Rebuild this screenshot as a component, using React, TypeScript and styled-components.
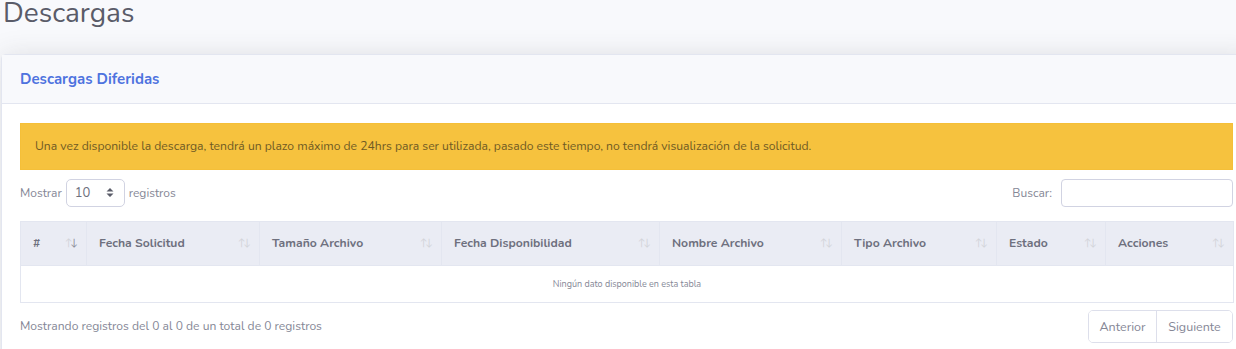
import React from "react";
import styled, { createGlobalStyle } from "styled-components";

const Global = createGlobalStyle`
  html, body { margin: 0; padding: 0; overflow: hidden; }
  body {
    background: #f8f9fc;
    font-family: "Nunito", "Lato", "Noto Sans", sans-serif;
    color: #858796;
  }
  * { box-sizing: border-box; }
`;

const Page = styled.div`
  width: 1280px;
  padding: 0 0 0 1px;
`;

const Title = styled.h1`
  margin: -3px 0 23px 2px;
  font-size: 28px;
  font-weight: 400;
  line-height: 1.2;
  color: #5a5c69;
`;

const Card = styled.section`
  width: 1253px;
  background: #fff;
  border: 1px solid #e3e6f0;
  border-radius: 5px;
  box-shadow: 0 2px 28px 0 rgba(58, 59, 69, 0.15);
`;

const CardHeader = styled.header`
  background: #f8f9fc;
  border-bottom: 1px solid #e3e6f0;
  padding: 12px 18px;
  height: 49px;
  display: flex;
  align-items: center;
`;

const CardTitle = styled.h6`
  margin: 0;
  font-size: 15px;
  font-weight: 700;
  color: #4e73df;
`;

const CardBody = styled.div`
  padding: 19px 19px 20px 18px;
  display: flex;
  flex-direction: column;
`;

const Alert = styled.div`
  width: 1213px;
  background: #f6c23e;
  border: 1px solid #f5bf38;
  color: #6f5a24;
  font-size: 12.15px;
  height: 47px;
  padding: 0 14px;
  display: flex;
  align-items: center;
  margin-bottom: 9px;
`;

const Controls = styled.div`
  width: 1213px;
  display: flex;
  justify-content: space-between;
  align-items: center;
  height: 28px;
  margin-bottom: 14px;
  font-size: 12px;
  color: #858796;
`;

const Label = styled.label`
  display: flex;
  align-items: center;
  gap: 4px;
`;

const SelectBox = styled.div`
  width: 59px;
  height: 28px;
  border: 1px solid #d1d3e2;
  border-radius: 5px;
  display: flex;
  align-items: center;
  justify-content: space-between;
  padding: 0 10px 0 8px;
  font-size: 13px;
  color: #6e707e;
  background: #fff;
`;

const SearchInput = styled.input`
  width: 172px;
  height: 28px;
  border: 1px solid #d1d3e2;
  border-radius: 4px;
  margin-left: 5px;
  background: #fff;
  outline: none;
`;

const Table = styled.table`
  width: 1213px;
  border-collapse: collapse;
  table-layout: fixed;
  margin-bottom: 7px;
`;

const Th = styled.th<{ $w: number }>`
  width: ${(p) => p.$w}px;
  height: 44px;
  background: #eaecf4;
  border: 1px solid #e3e6f0;
  text-align: left;
  padding: 0 12px 1px 12px;
  font-size: 12.2px;
  font-weight: 700;
  color: #6e707e;
  position: relative;
`;

const SortIcons = styled.span`
  position: absolute;
  right: 10px;
  top: 50%;
  transform: translateY(-50%);
  font-size: 10px;
  font-weight: 400;
  letter-spacing: -2px;
  display: flex;
`;

const Arrow = styled.span<{ $active?: boolean }>`
  color: ${(p) => (p.$active ? "#8a8c99" : "#d3d4da")};
`;

const Td = styled.td`
  height: 37px;
  border: 1px solid #e3e6f0;
  text-align: center;
  font-size: 9px;
  color: #858796;
`;

const Footer = styled.div`
  width: 1213px;
  display: flex;
  justify-content: space-between;
  align-items: center;
  font-size: 12.1px;
  color: #858796;
`;

const Pager = styled.div`
  display: flex;
  border: 1px solid #dddfeb;
  border-radius: 5px;
  overflow: hidden;
`;

const PageBtn = styled.button<{ $w: number }>`
  width: ${(p) => p.$w}px;
  height: 31px;
  border: none;
  background: #fff;
  color: #858796;
  font-family: inherit;
  font-size: 12.5px;
  padding: 0;
  & + & { border-left: 1px solid #dddfeb; }
`;

const columns: [string, number, boolean][] = [
  ["#", 66, true],
  ["Fecha Solicitud", 173, false],
  ["Tamaño Archivo", 182, false],
  ["Fecha Disponibilidad", 218, false],
  ["Nombre Archivo", 182, false],
  ["Tipo Archivo", 155, false],
  ["Estado", 109, false],
  ["Acciones", 128, false],
];

export default function App() {
  return (
    <Page>
      <Global />
      <Title>Descargas</Title>
      <Card>
        <CardHeader>
          <CardTitle>Descargas Diferidas</CardTitle>
        </CardHeader>
        <CardBody>
          <Alert>
            Una vez disponible la descarga, tendrá un plazo máximo de 24hrs para ser utilizada, pasado este tiempo, no tendrá visualización de la solicitud.
          </Alert>
          <Controls>
            <Label>
              Mostrar
              <SelectBox>
                <span>10</span>
                <svg width="8" height="11" viewBox="0 0 8 11">
                  <path d="M4 1 L7.5 4.5 H0.5 Z M4 10 L7.5 6.5 H0.5 Z" fill="#5a5c69" />
                </svg>
              </SelectBox>
              registros
            </Label>
            <Label>
              Buscar:
              <SearchInput type="search" />
            </Label>
          </Controls>
          <Table>
            <thead>
              <tr>
                {columns.map(([name, w, active]) => (
                  <Th key={name} $w={w}>
                    {name}
                    <SortIcons>
                      <Arrow>↑</Arrow>
                      <Arrow $active={active}>↓</Arrow>
                    </SortIcons>
                  </Th>
                ))}
              </tr>
            </thead>
            <tbody>
              <tr>
                <Td colSpan={8}>Ningún dato disponible en esta tabla</Td>
              </tr>
            </tbody>
          </Table>
          <Footer>
            <span>Mostrando registros del 0 al 0 de un total de 0 registros</span>
            <Pager>
              <PageBtn $w={67}>Anterior</PageBtn>
              <PageBtn $w={76}>Siguiente</PageBtn>
            </Pager>
          </Footer>
        </CardBody>
      </Card>
    </Page>
  );
}
